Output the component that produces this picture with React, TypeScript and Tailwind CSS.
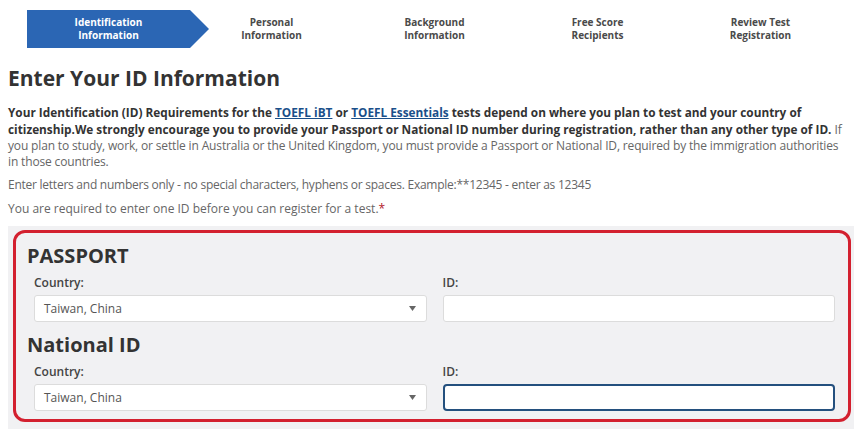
const steps = [
  ["Identification", "Information"],
  ["Personal", "Information"],
  ["Background", "Information"],
  ["Free Score", "Recipients"],
  ["Review Test", "Registration"],
];

function Select() {
  return (
    <div className="flex h-[27px] items-center justify-between rounded-[3px] border border-[#dcdcdc] bg-white pl-[9px] pr-[10px]">
      <span className="text-[12px] text-[#555]">Taiwan, China</span>
      <svg width="7" height="5" viewBox="0 0 7 5">
        <path d="M0 0h7L3.5 5z" fill="#666" />
      </svg>
    </div>
  );
}

function IdSection({ title, focused }: { title: string; focused?: boolean }) {
  return (
    <div>
      <h2 className="text-[20px] font-bold leading-[26px] text-[#333]">{title}</h2>
      <div className="mt-[6px] grid grid-cols-2 gap-x-[16px] pl-[7px]">
        <div>
          <div className="mb-[4px] text-[12px] font-semibold leading-[16px] text-[#444]">Country:</div>
          <Select />
        </div>
        <div>
          <div className="mb-[4px] text-[12px] font-semibold leading-[16px] text-[#444]">ID:</div>
          {focused ? (
            <div className="h-[27px] rounded-[4px] border-2 border-[#24507e] bg-white" />
          ) : (
            <div className="h-[27px] rounded-[3px] border border-[#dcdcdc] bg-white" />
          )}
        </div>
      </div>
    </div>
  );
}

export default function App() {
  return (
    <div className="h-[429px] w-[862px] overflow-hidden bg-white font-['Open_Sans',sans-serif]">
      <div className="flex pl-[27px] pt-[10px]">
        {steps.map((s, i) => (
          <div key={i} className="relative flex h-[38px] w-[163px] flex-col items-center justify-center">
            {i === 0 && (
              <svg className="absolute left-0 top-0" width="183" height="38" viewBox="0 0 183 38">
                <path d="M0 0H163L182 19L163 38H0Z" fill="#2b66b4" />
              </svg>
            )}
            <span
              className={
                "relative text-[10px] font-bold leading-[13px] " +
                (i === 0 ? "text-white" : "text-[#4a4a4a]")
              }
            >
              {s[0]}
            </span>
            <span
              className={
                "relative text-[10px] font-bold leading-[13px] " +
                (i === 0 ? "text-white" : "text-[#4a4a4a]")
              }
            >
              {s[1]}
            </span>
          </div>
        ))}
      </div>

      <div className="pl-[8px] pr-[4px]">
        <h1 className="mt-[16px] text-[21px] font-bold leading-[28px] text-[#333]">Enter Your ID Information</h1>

        <p className="mt-[12px] pr-[10px] text-[12px] leading-[16px] tracking-[-0.15px] text-[#666]">
          <span className="text-[11.8px] font-bold tracking-normal text-[#333]">
            Your Identification (ID) Requirements for the{" "}
            <a className="text-[#1a4f8a] underline">TOEFL iBT</a> or{" "}
            <a className="text-[#1a4f8a] underline">TOEFL Essentials</a> tests depend on where you plan to test and your
            country of citizenship.We strongly encourage you to provide your Passport or National ID number during
            registration, rather than any other type of ID.
          </span>{" "}
          If you plan to study, work, or settle in Australia or the United Kingdom, you must provide a Passport or
          National ID, required by the immigration authorities in those countries.
        </p>

        <p className="mt-[7px] text-[12px] leading-[16px] tracking-[-0.25px] text-[#666]">
          Enter letters and numbers only - no special characters, hyphens or spaces. Example:**12345 - enter as 12345
        </p>

        <p className="mt-[8px] text-[12px] leading-[16px] text-[#666]">
          You are required to enter one ID before you can register for a test.
          <span className="text-[#b3182a]">*</span>
        </p>
      </div>

      <div className="mx-[8px] mt-[9px] h-[220px] bg-[#f1f1f3] px-[5px] pt-[4px]">
        <div className="w-[838px] rounded-[12px] border-[3px] border-[#d3202f] pb-[8px] pl-[11px] pr-[13px] pt-[10px]">
          <IdSection title="PASSPORT" />
          <div className="mt-[10px]">
            <IdSection title="National ID" focused />
          </div>
        </div>
      </div>
    </div>
  );
}
